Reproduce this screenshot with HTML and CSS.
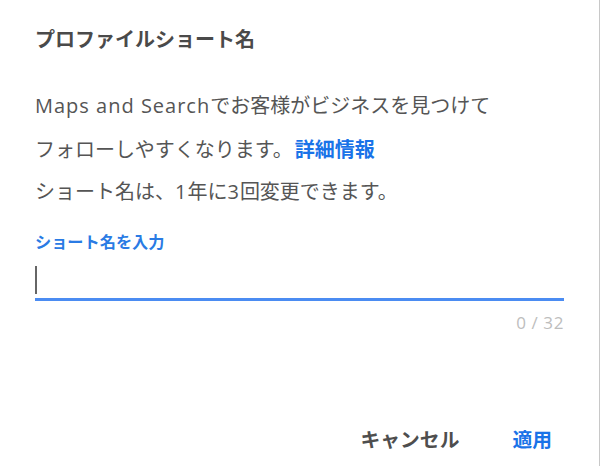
FILE: index.html
```html
<!DOCTYPE html>
<html lang="ja">
<head>
<meta charset="utf-8">
<title>プロファイルショート名</title>
<link rel="stylesheet" href="styles.css">
</head>
<body>
<div class="dialog">
  <h1 class="title">プロファイルショート名</h1>
  <p class="desc"><span class="latin">Maps and Search</span>でお客様がビジネスを見つけて<br>フォローしやすくなります。<a class="link" href="#">詳細情報</a></p>
  <p class="note">ショート名は、<span class="latin">1</span>年に<span class="latin">3</span>回変更できます。</p>
  <div class="label">ショート名を入力</div>
  <div class="field"><span class="caret"></span></div>
  <div class="counter">0 / 32</div>
  <div class="actions">
    <button class="btn btn-cancel">キャンセル</button>
    <button class="btn btn-apply">適用</button>
  </div>
</div>
</body>
</html>
```
FILE: styles.css
```css
html, body {
  margin: 0;
  padding: 0;
  background: #fff;
}
body {
  font-family: "Noto Sans CJK JP", "Open Sans", sans-serif;
  color: #555;
}
.dialog {
  width: 600px;
  height: 466px;
  box-sizing: border-box;
  border-right: 1px solid #c8c8c8;
  padding: 0 35px;
  display: flex;
  flex-direction: column;
}
.title {
  margin: 25px 0 0;
  font-size: 20px;
  line-height: 28px;
  font-weight: 700;
  color: #4a4a4a;
}
.desc, .note {
  margin: 0;
  font-size: 20px;
  line-height: 42.5px;
  color: #555;
}
.desc {
  margin-top: 31px;
}
.latin {
  font-family: "Open Sans", sans-serif;
  letter-spacing: 1px;
}
.link {
  color: #1a73e8;
  font-weight: 700;
  text-decoration: none;
  margin-left: 2px;
}
.label {
  margin-top: 17px;
  font-size: 16.2px;
  line-height: 20px;
  font-weight: 700;
  color: #2a7be4;
}
.field {
  margin-top: 13px;
  height: 34px;
  border-bottom: 3px solid #4b8cf2;
  display: flex;
  align-items: flex-start;
}
.caret {
  display: block;
  width: 2px;
  height: 28px;
  margin-top: 2px;
  background: #666;
}
.counter {
  margin-top: 12px;
  text-align: right;
  font-family: "Open Sans", sans-serif;
  font-size: 17px;
  letter-spacing: 0.6px;
  line-height: 20px;
  color: #bdbdbd;
}
.actions {
  margin-top: auto;
  margin-bottom: 10px;
  display: flex;
  justify-content: flex-end;
  gap: 29px;
}
.btn {
  border: 0;
  background: none;
  padding: 0 12px;
  height: 36px;
  font-family: "Noto Sans CJK JP", sans-serif;
  font-size: 19.8px;
  font-weight: 700;
  cursor: pointer;
}
.btn-cancel {
  color: #4e4e4e;
}
.btn-apply {
  color: #1a73e8;
}
```
